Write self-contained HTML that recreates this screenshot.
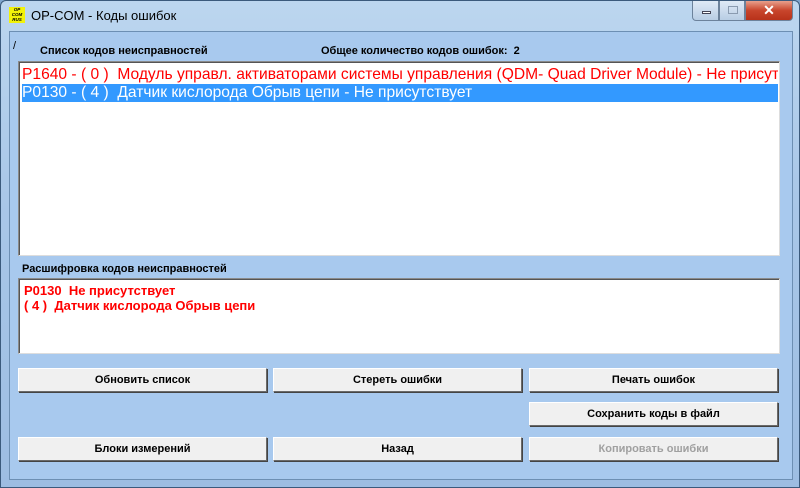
<!DOCTYPE html>
<html><head><meta charset="utf-8"><style>
*{margin:0;padding:0;box-sizing:border-box}
body{width:800px;height:488px;overflow:hidden;background:#7fa6cf;font-family:"Liberation Sans",sans-serif;position:relative}
.win{position:absolute;left:0;top:0;width:800px;height:488px;background:linear-gradient(180deg,#bcd6ef 0%,#a9c7e8 40%,#9dbde2 100%);border:1px solid #3b5a7c;border-radius:6px 6px 0 0}
.title{position:absolute;left:30px;top:7px;font-size:13px;color:#000}
.icon{position:absolute;left:8px;top:6px;width:16px;height:16px;background:#f2f20a;font-size:4.5px;font-weight:bold;line-height:5px;text-align:center;color:#000;font-style:italic}
.client{position:absolute;left:8px;top:30px;width:784px;height:449px;background:#a8c9ee;border:1px solid #6d8fb3}
.lbl{position:absolute;font-size:11px;font-weight:bold;color:#000}
.box{position:absolute;background:#fff;border:1px solid #8a8a8a;border-right-color:#ddd;border-bottom-color:#ddd;box-shadow:inset 1px 1px 0 #555}
.row{position:absolute;left:3px;height:18px;font-size:15.6px;line-height:18px;white-space:nowrap;overflow:hidden;color:#f00}
.btn{position:absolute;width:249px;height:24px;background:#f0f0f0;border:1px solid #fff;border-right-color:#6a6a6a;border-bottom-color:#6a6a6a;box-shadow:1px 1px 0 #444;font-size:11px;font-weight:bold;text-align:center;line-height:22px;color:#000}
.dis{color:#a0a0a0}
.cb{position:absolute;top:0;height:20px;border:1px solid #6c829b;border-top:none}
</style></head><body>
<div class="win">
<div class="icon">OP<br>COM<br>RUS</div>
<div class="title">OP-COM - Коды ошибок</div>
<div class="cb" style="left:691px;width:27px;border-radius:0 0 0 4px;background:linear-gradient(#dfeaf6,#b8cde4)"><div style="position:absolute;left:9px;top:10px;width:9px;height:3px;background:#fff;border:1px solid #445"></div></div>
<div class="cb" style="left:718px;width:26px;background:linear-gradient(#dfeaf6,#b8cde4)"><div style="position:absolute;left:8px;top:5px;width:10px;height:8px;border:1px solid #8a9bb0"></div></div>
<div class="cb" style="left:744px;width:48px;border-radius:0 0 4px 0;background:linear-gradient(#e8a08c,#c8452c 50%,#b8321a);color:#fff;font-weight:bold;font-size:14px;text-align:center;line-height:18px">✕</div>
<div class="client">
<div style="position:absolute;left:3px;top:8px;font-size:11px">/</div>
<div class="lbl" style="left:30px;top:13px">Список кодов неисправностей</div>
<div class="lbl" style="left:311px;top:13px">Общее количество кодов ошибок:&nbsp; 2</div>
<div class="box" style="left:8px;top:29px;width:762px;height:195px">
<div class="row" style="top:4px;width:756px">P1640 - ( 0 )&nbsp; Модуль управл. активаторами системы управления (QDM- Quad Driver Module) - Не присут</div>
<div class="row" style="top:22px;width:756px;background:#3399ff;color:#fff">P0130 - ( 4 )&nbsp; Датчик кислорода Обрыв цепи - Не присутствует</div>
</div>
<div class="lbl" style="left:12px;top:231px">Расшифровка кодов неисправностей</div>
<div class="box" style="left:8px;top:246px;width:762px;height:76px;color:#f00;font-weight:bold;font-size:13px;line-height:15px;padding:4px 5px">P0130&nbsp; Не присутствует<br>( 4 )&nbsp; Датчик кислорода Обрыв цепи</div>
<div class="btn" style="left:8px;top:336px">Обновить список</div>
<div class="btn" style="left:263px;top:336px">Стереть ошибки</div>
<div class="btn" style="left:519px;top:336px">Печать ошибок</div>
<div class="btn" style="left:519px;top:370px">Сохранить коды в файл</div>
<div class="btn" style="left:8px;top:405px">Блоки измерений</div>
<div class="btn" style="left:263px;top:405px">Назад</div>
<div class="btn dis" style="left:519px;top:405px">Копировать ошибки</div>
</div>
</div>
</body></html>
